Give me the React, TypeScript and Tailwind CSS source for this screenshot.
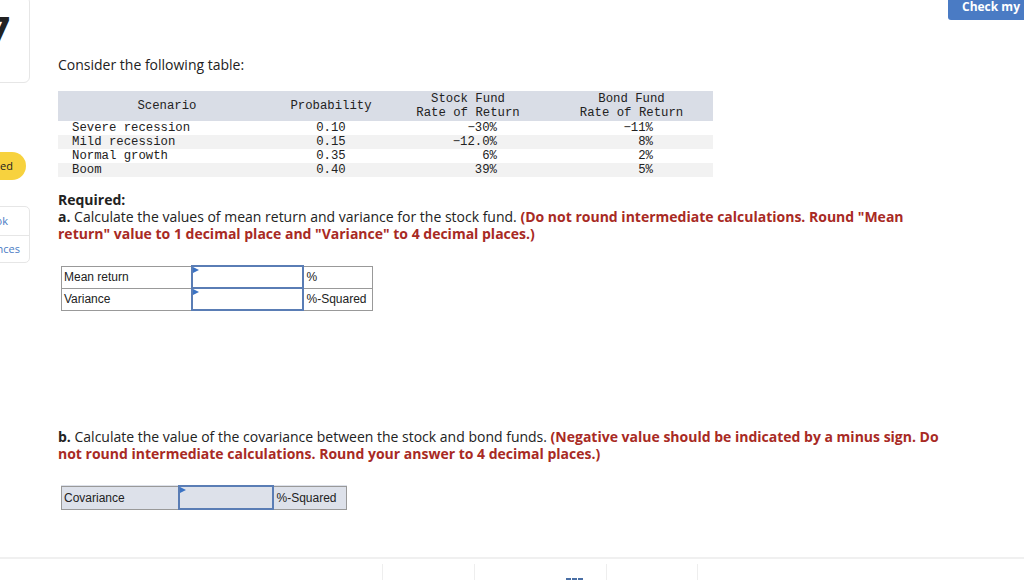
import React from "react";

const rows = [
  { s: "Severe recession", p: "0.10", st: "\u221230%", b: "\u221211%", grey: false },
  { s: "Mild recession", p: "0.15", st: "\u221212.0%", b: "8%", grey: true },
  { s: "Normal growth", p: "0.35", st: "6%", b: "2%", grey: false },
  { s: "Boom", p: "0.40", st: "39%", b: "5%", grey: true },
];

function Flag() {
  return (
    <svg className="absolute left-0 top-0" width="6" height="7" viewBox="0 0 6 7">
      <path d="M0 0 L6 3 L0 6 Z" fill="#3b73c4" />
    </svg>
  );
}

export default function App() {
  return (
    <div className="relative w-[1024px] h-[580px] overflow-hidden bg-white" style={{ fontFamily: '"Open Sans", sans-serif' }}>
      {/* Check my button */}
      <div className="absolute right-0 top-0 w-[76px] h-[20px] bg-[#4a7bc4] rounded-bl-[3px] flex items-start pt-0 pl-[14px] text-white text-[12px] leading-[14px] font-bold whitespace-nowrap">
        Check my
      </div>

      {/* Left sidebar fragments */}
      <div className="absolute left-[-10px] top-[-4px] w-[40px] h-[87px] border border-[#e6e6e6] rounded-[6px] bg-white overflow-hidden">
        <div className="absolute left-[-3px] top-[16px] text-[34px] leading-none font-black text-[#222]" style={{ fontFamily: '"DejaVu Sans", sans-serif' }}>7</div>
      </div>
      <div className="absolute left-[-20px] top-[152px] w-[46px] h-[28px] rounded-full bg-[#f7d23e] flex items-center justify-end pr-[13px] text-[11px] text-[#222]">
        ed
      </div>
      <div className="absolute left-[-10px] top-[206px] w-[40px] h-[57px] border border-[#e6e6e6] rounded-[5px] bg-white flex flex-col text-[11px] text-[#4a7bc4] whitespace-nowrap">
        <div className="h-[29px] border-b border-[#e6e6e6] flex items-center justify-end pr-[21px]">ok</div>
        <div className="flex-1 flex items-center justify-end pr-[9px]">nces</div>
      </div>

      {/* Main content */}
      <div className="pl-[58px] pt-[56px] text-[#222]">
        <div className="text-[14px] leading-[18px]">Consider the following table:</div>

        <table
          className="mt-[17px] border-collapse text-[12.3px] text-[#222]"
          style={{ fontFamily: '"Liberation Mono", monospace' }}
        >
          <thead>
            <tr className="bg-[#d9dde6] h-[30px] leading-[14px]">
              <th className="w-[218px] font-normal text-center align-middle p-0">Scenario</th>
              <th className="w-[110px] font-normal text-center align-middle p-0">Probability</th>
              <th className="w-[164px] font-normal text-center align-middle p-0">
                Stock Fund
                <br />
                Rate of Return
              </th>
              <th className="w-[163px] font-normal text-center align-middle p-0">
                Bond Fund
                <br />
                Rate of Return
              </th>
            </tr>
          </thead>
          <tbody>
            {rows.map((r) => (
              <tr key={r.s} className={(r.grey ? "bg-[#f2f2f2] " : "") + "h-[14px] leading-[14px]"}>
                <td className="pl-[14px] p-0">{r.s}</td>
                <td className="text-center p-0">{r.p}</td>
                <td className="text-right pr-[53px] p-0">{r.st}</td>
                <td className="text-right pr-[60px] p-0">{r.b}</td>
              </tr>
            ))}
          </tbody>
        </table>

        <div className="mt-[14px] text-[14px] leading-[17px] pr-[100px]">
          <div className="font-bold">Required:</div>
          <div>
            <span className="font-bold">a.</span> Calculate the values of mean return and variance for the stock fund.{" "}
            <span className="font-bold text-[#a82a24]">
              (Do not round intermediate calculations. Round "Mean return" value to 1 decimal place and "Variance" to 4 decimal places.)
            </span>
          </div>
        </div>

        <table className="mt-[23px] ml-[3px] border-collapse text-[12px]" style={{ fontFamily: '"Liberation Sans", Arial, sans-serif' }}>
          <tbody>
            <tr className="h-[22px]">
              <td className="w-[130px] border border-[#999] pl-[2px] py-0">Mean return</td>
              <td className="relative w-[111px] border-2 border-[#5a7db5] p-0"><Flag /></td>
              <td className="w-[70px] border border-[#999] pl-[3px] py-0">%</td>
            </tr>
            <tr className="h-[22px]">
              <td className="border border-[#999] pl-[2px] py-0">Variance</td>
              <td className="relative border-2 border-[#5a7db5] p-0"><Flag /></td>
              <td className="border border-[#999] pl-[3px] py-0">%-Squared</td>
            </tr>
          </tbody>
        </table>

        <div className="mt-[117px] text-[14px] leading-[17px] pr-[70px]">
          <span className="font-bold">b.</span> Calculate the value of the covariance between the stock and bond funds.{" "}
          <span className="font-bold text-[#a82a24]">
            (Negative value should be indicated by a minus sign. Do not round intermediate calculations. Round your answer to 4 decimal places.)
          </span>
        </div>

        <table className="mt-[23px] ml-[3px] border-collapse text-[12px] bg-[#dde1ea]" style={{ fontFamily: '"Liberation Sans", Arial, sans-serif' }}>
          <tbody>
            <tr className="h-[23px]">
              <td className="w-[117px] border border-[#999] pl-[2px] py-0">Covariance</td>
              <td className="relative w-[94px] border-2 border-[#5a7db5] p-0"><Flag /></td>
              <td className="w-[74px] border border-[#999] pl-[3px] py-0">%-Squared</td>
            </tr>
          </tbody>
        </table>
      </div>

      {/* Bottom bar */}
      <div className="absolute left-0 right-0 top-[557px] h-[23px] border-t-2 border-[#f0f0f0] flex">
        <div className="w-[382px]" />
        <div className="w-[92px] border-l border-[#eeeeee] mt-[5px]" />
        <div className="w-[132px] border-l border-[#eeeeee] mt-[5px] relative">
          <div className="absolute left-[91px] top-[14px] flex gap-[1px]">
            <div className="w-[5px] h-[3px] bg-[#4a6fa5]" />
            <div className="w-[5px] h-[3px] bg-[#4a6fa5]" />
            <div className="w-[5px] h-[3px] bg-[#4a6fa5]" />
          </div>
        </div>
        <div className="w-[91px] border-l border-[#eeeeee] mt-[5px]" />
        <div className="flex-1 border-l border-[#eeeeee] mt-[5px]" />
      </div>
    </div>
  );
}
